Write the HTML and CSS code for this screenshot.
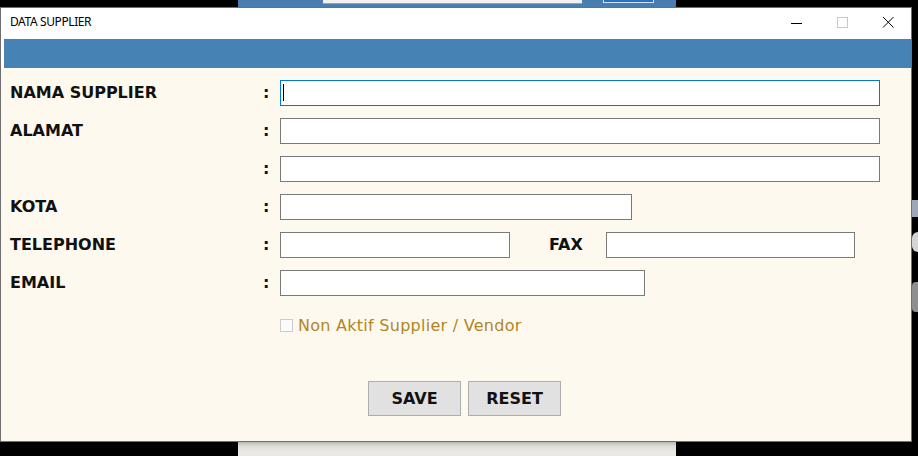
FILE: index.html
```html
<!DOCTYPE html>
<html lang="id">
<head>
<meta charset="utf-8">
<title>DATA SUPPLIER</title>
<link rel="stylesheet" href="styles.css">
</head>
<body>
<div class="desktop">
  <div class="bgwin">
    <div class="bg-top">
      <div class="bg-blue-a"></div>
      <div class="bg-input"></div>
      <div class="bg-blue-b"><div class="bg-btn"></div></div>
    </div>
    <div class="bg-shadow"></div>
  </div>
  <div class="edge-icon edge-a"></div>
  <div class="edge-icon edge-b"></div>
  <div class="edge-icon edge-c"></div>

  <div class="window">
    <div class="titlebar">
      <div class="title">DATA SUPPLIER</div>
      <div class="controls">
        <div class="ctl">
          <svg width="46" height="31" viewBox="0 0 46 31"><line x1="18" y1="15.5" x2="29" y2="15.5" stroke="#000" stroke-width="1"/></svg>
        </div>
        <div class="ctl">
          <svg width="46" height="31" viewBox="0 0 46 31"><rect x="18.5" y="9.5" width="10" height="10" fill="none" stroke="#c8c8c8" stroke-width="1"/></svg>
        </div>
        <div class="ctl">
          <svg width="46" height="31" viewBox="0 0 46 31"><path d="M18 9 L28.5 19.5 M28.5 9 L18 19.5" stroke="#000" stroke-width="1" fill="none"/></svg>
        </div>
      </div>
    </div>
    <div class="bluebar"></div>
    <div class="content">
      <div class="row">
        <div class="label">NAMA SUPPLIER</div>
        <div class="colon">:</div>
        <div class="field focus w600"><span class="caret"></span></div>
      </div>
      <div class="row">
        <div class="label">ALAMAT</div>
        <div class="colon">:</div>
        <div class="field w600"></div>
      </div>
      <div class="row">
        <div class="label"></div>
        <div class="colon">:</div>
        <div class="field w600"></div>
      </div>
      <div class="row">
        <div class="label">KOTA</div>
        <div class="colon">:</div>
        <div class="field w352"></div>
      </div>
      <div class="row">
        <div class="label">TELEPHONE</div>
        <div class="colon">:</div>
        <div class="field w230"></div>
        <div class="label fax">FAX</div>
        <div class="field w249"></div>
      </div>
      <div class="row">
        <div class="label">EMAIL</div>
        <div class="colon">:</div>
        <div class="field w365"></div>
      </div>
      <div class="check-row">
        <span class="checkbox"></span>
        <span class="check-label">Non Aktif Supplier / Vendor</span>
      </div>
      <div class="buttons">
        <button class="btn">SAVE</button>
        <button class="btn">RESET</button>
      </div>
    </div>
  </div>
</div>
</body>
</html>
```

FILE: styles.css
```css
html, body {
  margin: 0;
  padding: 0;
  background: #000;
}
.desktop {
  position: relative;
  width: 918px;
  height: 456px;
  overflow: hidden;
  background: #000;
}
.bgwin {
  position: absolute;
  left: 238px;
  top: 0;
  width: 438px;
  height: 456px;
  background: #ebe9e6;
}
.bg-top {
  display: flex;
  height: 7px;
}
.bg-blue-a {
  width: 85px;
  background: #4a7db0;
}
.bg-input {
  width: 259px;
  background: #4a7db0;
  box-shadow: inset 0 3px 0 #f2f1ef, inset 0 4px 0 #9aa3ae;
}
.bg-blue-b {
  flex: 1;
  background: #4a7db0;
  padding-left: 21px;
}
.bg-btn {
  width: 49px;
  height: 2px;
  border: 1px solid #cfe3f7;
  border-top: none;
  background: #2a72c0;
}
.bg-shadow {
  position: absolute;
  left: 0;
  right: 0;
  top: 442px;
  height: 14px;
  background: linear-gradient(#b9b7b4, #dedcd9 4px, #ebe9e6 10px);
}
.edge-icon {
  position: absolute;
  left: 912px;
  width: 6px;
}
.edge-a { top: 200px; height: 17px; background: #9ea7b8; }
.edge-b { top: 232px; height: 20px; background: #d4d4d4; border-radius: 6px 0 0 6px; }
.edge-c { top: 282px; height: 30px; background: #8f8f8f; border-radius: 4px 0 0 4px; }

.window {
  position: absolute;
  left: 0;
  top: 7px;
  width: 912px;
  height: 435px;
  box-sizing: border-box;
  border: 1px solid #6f6f6f;
  background: #fff;
  display: flex;
  flex-direction: column;
}
.titlebar {
  display: flex;
  justify-content: space-between;
  height: 31px;
  flex: none;
}
.title {
  font-family: "Noto Sans", "Open Sans", sans-serif;
  font-size: 12px;
  letter-spacing: -0.4px;
  line-height: 28px;
  height: 28px;
  padding-left: 9px;
  color: #000;
}
.controls {
  display: flex;
}
.ctl {
  width: 46px;
  height: 31px;
}
.ctl svg {
  display: block;
}
.bluebar {
  flex: none;
  height: 29px;
  margin-left: 3px;
  background: #4682b4;
}
.content {
  flex: 1;
  background: #fef9ef;
  padding: 12px 0 0 9px;
  font-family: "DejaVu Sans", Verdana, sans-serif;
  font-size: 16px;
  color: #111;
}
.row {
  display: flex;
  align-items: center;
  height: 26px;
  margin-bottom: 12px;
}
.label {
  width: 253px;
  font-weight: bold;
  padding-bottom: 2px;
  white-space: nowrap;
}
.colon {
  width: 17px;
  font-weight: bold;
  padding-bottom: 2px;
}
.fax {
  width: 57px;
  margin-left: 39px;
}
.field {
  height: 26px;
  box-sizing: border-box;
  border: 1px solid #7a7a7a;
  background: #fff;
  display: flex;
  align-items: center;
}
.field.focus {
  border-color: #0078d7;
}
.caret {
  width: 1px;
  height: 17px;
  margin-left: 2px;
  margin-top: -2px;
  background: #000;
}
.w600 { width: 600px; }
.w352 { width: 352px; }
.w230 { width: 230px; }
.w249 { width: 249px; }
.w365 { width: 365px; }
.check-row {
  display: flex;
  align-items: center;
  height: 13px;
  margin-top: 23px;
  padding-left: 270px;
}
.checkbox {
  width: 13px;
  height: 13px;
  box-sizing: border-box;
  border: 1px solid #cccccc;
  background: #fbfbfb;
  flex: none;
}
.check-label {
  margin-left: 5px;
  color: #b08626;
  letter-spacing: 0.27px;
  white-space: nowrap;
}
.buttons {
  display: flex;
  gap: 7px;
  margin-top: 49px;
  padding-left: 358px;
}
.btn {
  width: 93px;
  height: 35px;
  box-sizing: border-box;
  border: 1px solid #adadad;
  background: #e1e1e1;
  font-family: "DejaVu Sans", Verdana, sans-serif;
  font-size: 16px;
  font-weight: bold;
  color: #111;
  padding: 0;
  margin: 0;
}
```
